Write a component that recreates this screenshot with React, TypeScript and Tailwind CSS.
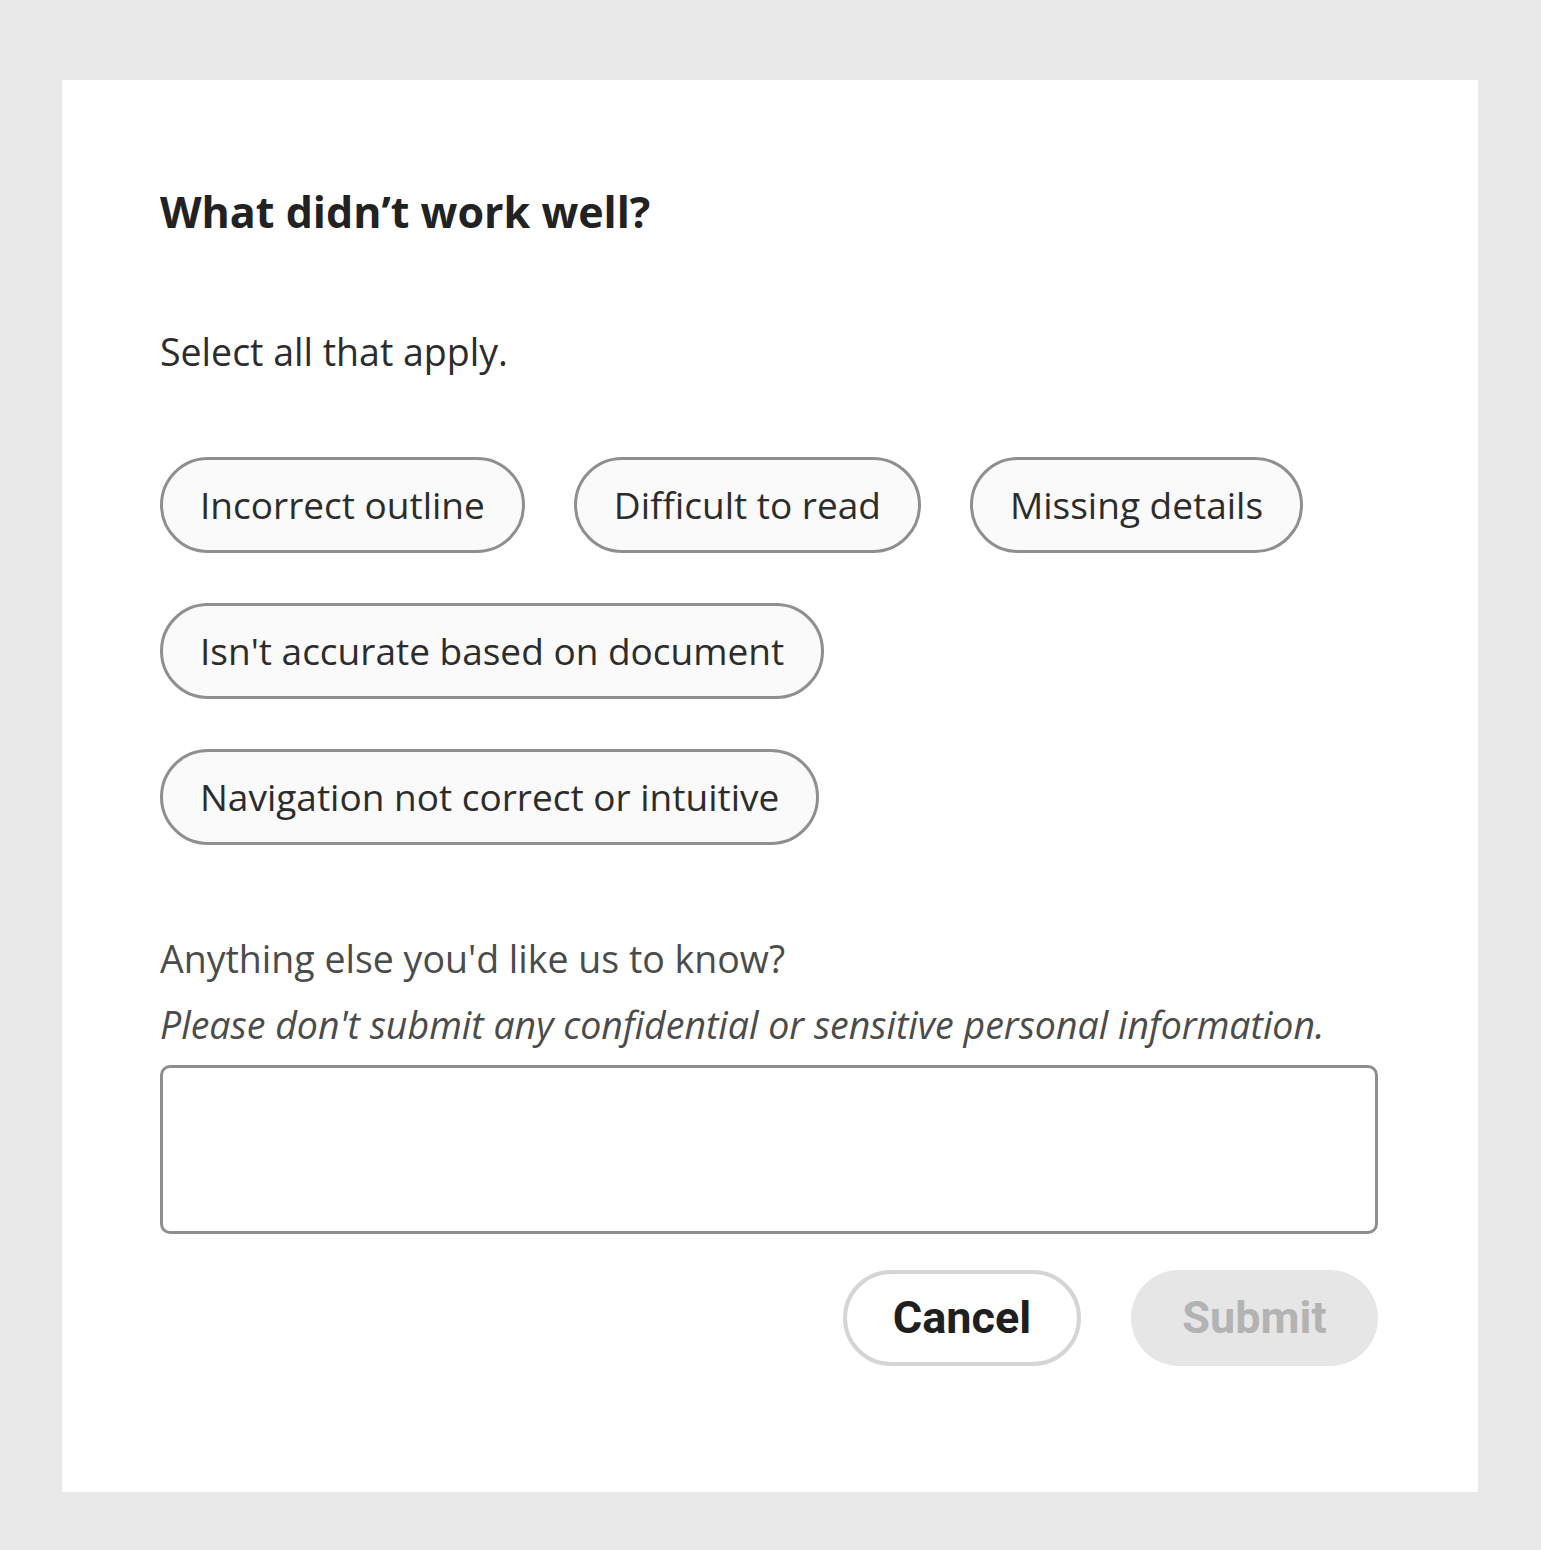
const rows = [
  ["Incorrect outline", "Difficult to read", "Missing details"],
  ["Isn't accurate based on document"],
  ["Navigation not correct or intuitive"],
];

function Chip({ label }: { label: string }) {
  return (
    <button
      type="button"
      className="h-[96px] rounded-full border-[3px] border-[#8f8f8f] bg-[#fafafa] px-[37px] text-[37px] text-[#2c2c2c]"
    >
      {label}
    </button>
  );
}

export default function App() {
  return (
    <div className="min-h-[1550px] bg-[#e9e9e9] pl-[62px] pt-[80px] font-['Open_Sans',sans-serif]">
      <div className="w-[1416px] bg-white pb-[126px] pl-[98px] pr-[100px] pt-[100px]">
        <h2 className="text-[43px] font-bold leading-[64px] text-[#222222]">What didn’t work well?</h2>

        <p className="mt-[84px] text-[37.5px] leading-[48px] text-[#2c2c2c]">Select all that apply.</p>

        <div className="mt-[81px] flex flex-col gap-[50px]">
          {rows.map((row, i) => (
            <div key={i} className="flex gap-[49px]">
              {row.map((label) => (
                <Chip key={label} label={label} />
              ))}
            </div>
          ))}
        </div>

        <p className="mt-[90px] text-[37.5px] leading-[48px] text-[#4b4b4b]">Anything else you'd like us to know?</p>
        <p className="mt-[18px] text-[37.5px] italic leading-[48px] text-[#4b4b4b]">
          Please don't submit any confidential or sensitive personal information.
        </p>

        <textarea className="mt-[16px] block h-[169px] w-full resize-none rounded-[10px] border-[3px] border-[#8e8e8e] bg-white" />

        <div className="mt-[36px] flex justify-end gap-[50px] font-['Roboto',sans-serif]">
          <button
            type="button"
            className="h-[96px] w-[238px] rounded-full border-[4px] border-[#d5d5d5] bg-white text-[45px] font-bold text-[#1f1f1f]"
          >
            Cancel
          </button>
          <button
            type="button"
            className="h-[96px] w-[247px] rounded-full bg-[#e6e6e6] text-[45px] font-bold text-[#b3b3b3]"
          >
            Submit
          </button>
        </div>
      </div>
    </div>
  );
}
